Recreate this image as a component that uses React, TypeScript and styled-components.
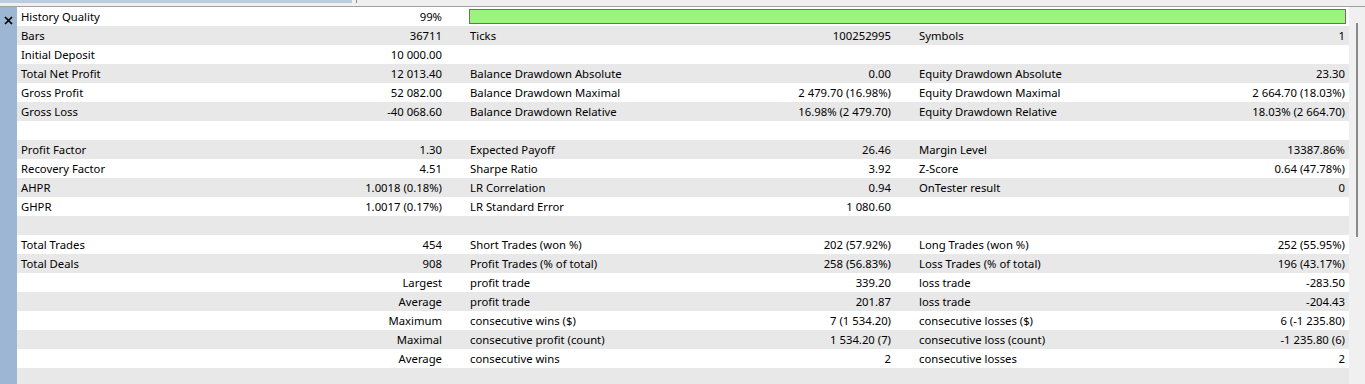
import { Fragment } from "react";
import styled, { createGlobalStyle } from "styled-components";

type Pair = [string, string];
type Line = Pair[] | null;

const GlobalStyle = createGlobalStyle`
  html, body {
    margin: 0;
    padding: 0;
    background: #f0f0f0;
  }
`;

const Window = styled.div`
  width: 1365px;
  height: 384px;
  display: flex;
  flex-direction: column;
  overflow: hidden;
  font-family: "Noto Sans", "Open Sans", sans-serif;
  font-size: 11.3px;
  color: #000;
  background: #f0f0f0;
`;

const TopStrip = styled.div`
  height: 6px;
  display: flex;
  gap: 4px;
  border-bottom: 1px solid #a0a0a0;
  background: #f0f0f0;
`;

const TabMark = styled.div`
  width: 352px;
  height: 3px;
  background: #bccde0;
`;

const TabTick = styled.div`
  width: 1px;
  height: 3px;
  background: #8a8a8a;
`;

const Body = styled.div`
  flex: 1;
  display: flex;
  min-height: 0;
`;

const SideBar = styled.div`
  width: 17px;
  flex: none;
  background: #9db6d4;
  display: flex;
  justify-content: center;
  padding-top: 6px;
  box-sizing: border-box;
`;

const Table = styled.div`
  width: 1332px;
  flex: none;
  display: flex;
  flex-direction: column;
`;

const Row = styled.div<{ $shade: boolean }>`
  height: 19px;
  flex: none;
  display: grid;
  grid-template-columns: 225px 204px 20px 225px 204px 20px 225px 209px;
  align-items: center;
  background: ${({ $shade }) => ($shade ? "#e8e8e8" : "#ffffff")};
`;

const Label = styled.span<{ $col: number }>`
  grid-column: ${({ $col }) => $col};
  padding: 0 4px;
  white-space: nowrap;
`;

const Value = styled.span<{ $col: number }>`
  grid-column: ${({ $col }) => $col};
  padding: 0 4px;
  text-align: right;
  white-space: nowrap;
`;

const QualityBar = styled.div`
  grid-column: 4 / 9;
  height: 15px;
  margin: 0 3px;
  box-sizing: border-box;
  border: 1px solid #6e6e6e;
  background: #99f57c;
`;

const ScrollTrack = styled.div`
  flex: 1;
  background: #f0f0f0;
  display: flex;
  justify-content: center;
  padding-top: 16px;
`;

const ScrollThumb = styled.div`
  width: 2px;
  height: 214px;
  background: #8a8a8a;
`;

const rows: Line[] = [
  [["History Quality", "99%"]],
  [["Bars", "36711"], ["Ticks", "100252995"], ["Symbols", "1"]],
  [["Initial Deposit", "10 000.00"]],
  [
    ["Total Net Profit", "12 013.40"],
    ["Balance Drawdown Absolute", "0.00"],
    ["Equity Drawdown Absolute", "23.30"],
  ],
  [
    ["Gross Profit", "52 082.00"],
    ["Balance Drawdown Maximal", "2 479.70 (16.98%)"],
    ["Equity Drawdown Maximal", "2 664.70 (18.03%)"],
  ],
  [
    ["Gross Loss", "-40 068.60"],
    ["Balance Drawdown Relative", "16.98% (2 479.70)"],
    ["Equity Drawdown Relative", "18.03% (2 664.70)"],
  ],
  null,
  [
    ["Profit Factor", "1.30"],
    ["Expected Payoff", "26.46"],
    ["Margin Level", "13387.86%"],
  ],
  [
    ["Recovery Factor", "4.51"],
    ["Sharpe Ratio", "3.92"],
    ["Z-Score", "0.64 (47.78%)"],
  ],
  [
    ["AHPR", "1.0018 (0.18%)"],
    ["LR Correlation", "0.94"],
    ["OnTester result", "0"],
  ],
  [
    ["GHPR", "1.0017 (0.17%)"],
    ["LR Standard Error", "1 080.60"],
  ],
  null,
  [
    ["Total Trades", "454"],
    ["Short Trades (won %)", "202 (57.92%)"],
    ["Long Trades (won %)", "252 (55.95%)"],
  ],
  [
    ["Total Deals", "908"],
    ["Profit Trades (% of total)", "258 (56.83%)"],
    ["Loss Trades (% of total)", "196 (43.17%)"],
  ],
  [
    ["", "Largest"],
    ["profit trade", "339.20"],
    ["loss trade", "-283.50"],
  ],
  [
    ["", "Average"],
    ["profit trade", "201.87"],
    ["loss trade", "-204.43"],
  ],
  [
    ["", "Maximum"],
    ["consecutive wins ($)", "7 (1 534.20)"],
    ["consecutive losses ($)", "6 (-1 235.80)"],
  ],
  [
    ["", "Maximal"],
    ["consecutive profit (count)", "1 534.20 (7)"],
    ["consecutive loss (count)", "-1 235.80 (6)"],
  ],
  [
    ["", "Average"],
    ["consecutive wins", "2"],
    ["consecutive losses", "2"],
  ],
  null,
];

const CloseIcon = () => (
  <svg width="9" height="9" viewBox="0 0 9 9">
    <path d="M1 1 L8 8 M8 1 L1 8" stroke="#000" strokeWidth="1.7" />
  </svg>
);

export default function App() {
  return (
    <>
      <GlobalStyle />
      <Window>
        <TopStrip>
          <TabMark />
          <TabTick />
        </TopStrip>
        <Body>
          <SideBar>
            <div>
              <CloseIcon />
            </div>
          </SideBar>
          <Table>
            {rows.map((line, i) => (
              <Row key={i} $shade={i % 2 === 1}>
                {line?.map(([label, value], g) => (
                  <Fragment key={g}>
                    <Label $col={g * 3 + 1}>{label}</Label>
                    <Value $col={g * 3 + 2}>{value}</Value>
                  </Fragment>
                ))}
                {i === 0 && <QualityBar />}
              </Row>
            ))}
          </Table>
          <ScrollTrack>
            <ScrollThumb />
          </ScrollTrack>
        </Body>
      </Window>
    </>
  );
}
